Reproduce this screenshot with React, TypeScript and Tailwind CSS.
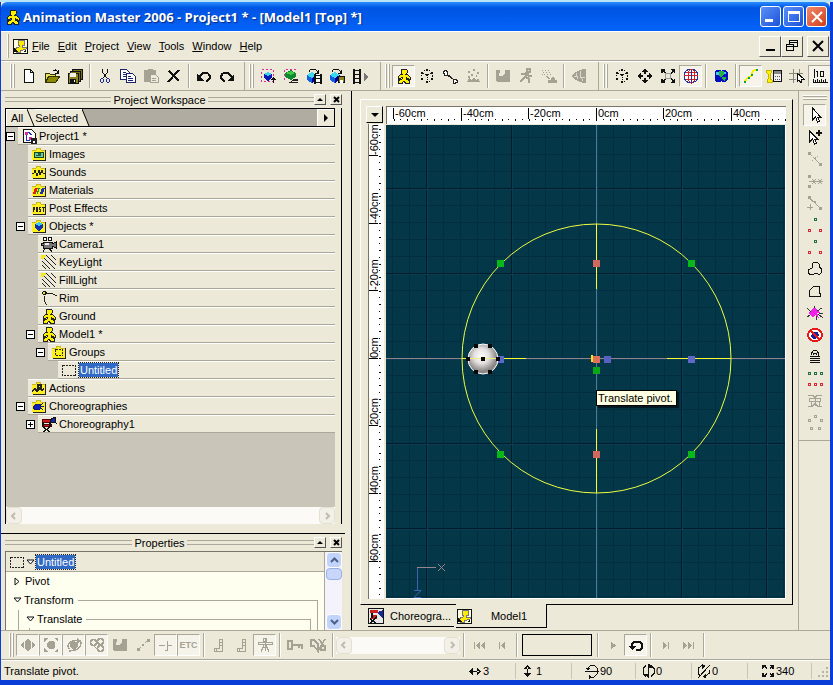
import { type ReactNode } from "react";
import { clsx } from "clsx";

const GREY = "#a5a193";

const man = (
  <path
    d="M6 1h4l1 1v3L9.500 6.500h2L14 9v2h-1.500L10 9.500V11l3.500 1.500V15H9.500L8 13l-1.500 2h-4v-2.500L6 11V9.500L3.500 11H2V9l2.500-2.500h2L5 5V2z"
    fill="#fff000"
    stroke="#222"
  />
);

const nodeRing = (color: string) => (
  <>
    <circle cx="8" cy="8" r="6" fill="none" stroke={color} strokeDasharray="1 2" />
    <path d="M4 5l4 2 4-2M8 7v6" fill="none" stroke={color} strokeDasharray="1 1" />
    <path
      d="M7 1h2v2H7zM2 4h2v2H2zM12 4h2v2h-2zM2 10h2v2H2zM12 10h2v2h-2zM7 13h2v2H7zM7 6h2v2H7z"
      fill={color}
    />
  </>
);

const cube = (
  <>
    <path d="M1 7l5-3 5 3v5l-5 3-5-3z" fill="#0000a0" />
    <path d="M1 7l5-3 5 3-5 3z" fill="#40d8f0" />
    <path d="M1 7l5 3v5l-5-3z" fill="#1060e0" />
  </>
);

const reel = (
  <path
    d="M0 0h2v15H0zM6 0h2v15H6zM2 1h4v1H2zM2 5h4v1H2zM2 9h4v1H2zM2 13h4v1H2z"
    fill="#111"
  />
);

const folder = (
  <>
    <path d="M1 4h4l1-2h3l1 2h4v10H1z" fill="#ffee20" />
    <path d="M14 4h1v11H2v-1h12z" fill="#222" />
    <path d="M1 4h4l1-2h3l1 2h4" fill="none" stroke="#c8b820" />
  </>
);

const spotRays = (
  <>
    <path d="M1 2l13 13M5 1l10 10M1 7l8 8M10 1l5 5M1 11l4 4" stroke="#222" />
    <path d="M0 1h5v2H3v2H0z" fill="#f4e820" />
  </>
);

const icons: Record<string, ReactNode> = {
  man,
  modelDoc: (
    <>
      <path d="M1 1h14v14H1z" fill="#fffce0" stroke="#111" />
      <path d="M7 2h5v5h-2v2h4v2l-3 1H8v2H4v-1H2v-2l5-2V7H6V4z" fill="#ffea00" stroke="#777" />
      <path d="M2 14h5l-5-4zM11 14l3-3v3z" fill="#111" />
    </>
  ),
  newFile: <path d="M3.500 1.500h6l3 3v10h-9zM9.500 1.500v3h3" fill="#fff" stroke="#111" />,
  open: (
    <>
      <path d="M1 13V5h4l1 1h5v2H5l-3 5z" fill="#e8e060" stroke="#333300" />
      <path d="M2 14l3-6h11l-4 6z" fill="#8c8800" stroke="#333300" />
      <path d="M9 3c2-2 4-1 5 2m0-3v3h-3" fill="none" stroke="#111" />
    </>
  ),
  saveAll: (
    <>
      <path d="M5 1h10v10H5z" fill="#777018" stroke="#111" />
      <path d="M3 3h10v10H3z" fill="#777018" stroke="#111" />
      <path d="M1 5h10v10H1z" fill="#8c8420" stroke="#111" />
      <path d="M3 5h6v4H3z" fill="#f4f2e8" />
      <path d="M3 11h6v4H3z" fill="#111" />
      <path d="M7 12h1v2H7z" fill="#fff" />
    </>
  ),
  cut: (
    <>
      <path d="M5.500 1v3l5 7M10.500 1v3l-5 7" fill="none" stroke="#111" />
      <ellipse cx="5" cy="12.500" rx="1.500" ry="2" fill="none" stroke="#1c2c9c" />
      <ellipse cx="11" cy="12.500" rx="1.500" ry="2" fill="none" stroke="#1c2c9c" />
    </>
  ),
  copy: (
    <>
      <path d="M.5 1.500h6l3 3v7h-9z" fill="#fff" stroke="#1c2470" />
      <path d="M3 4.500h3M3 6.500h5M3 8.500h5" stroke="#1c2470" />
      <path d="M6.500 5.500h6l3 3v6h-9z" fill="#fff" stroke="#1c2470" />
      <path d="M8 8.500h3M8 10.500h5M8 12.500h5" stroke="#1c2470" />
    </>
  ),
  paste: (
    <>
      <path d="M1 2h3l1-1h4l1 1h3v12H1z" fill={GREY} />
      <path d="M7.500 6.500h5l3 3v5h-8z" fill="#eceadc" stroke={GREY} />
      <path d="M9 10.500h4M9 12.500h4" stroke={GREY} />
    </>
  ),
  remove: <path d="M3 3l10 10M13 2L2 14" stroke="#111" strokeWidth="2" />,
  undo: (
    <>
      <path d="M4 9c1-5 9-6 10 0 0 2-2 4-4 4" fill="none" stroke="#111" strokeWidth="2" />
      <path d="M1 6v7h7z" fill="#111" />
    </>
  ),
  redo: (
    <>
      <path d="M12 9C11 4 3 3 2 9c0 2 2 4 4 4" fill="none" stroke="#111" strokeWidth="2" />
      <path d="M15 6v7H8z" fill="#111" />
    </>
  ),
  renderRegion: (
    <>
      <rect x="1.500" y="1.500" width="12" height="12" fill="none" stroke="#e02898" strokeDasharray="2 2" />
      <path d="M4 6l4-2 4 2v4l-4 3-4-3z" fill="#0818b0" />
      <path d="M4 6l4-2 4 2-4 2z" fill="#40d0e8" />
      <path d="M13.500 9v6m-2-3l2-2 2 2" fill="none" stroke="#111" />
    </>
  ),
  renderPreview: (
    <>
      <path d="M1.500 12V1.500H14" fill="none" stroke="#e02898" strokeDasharray="2 2" />
      <path d="M2 5l6-3 5 3v4l-5 3-6-3z" fill="#108a30" />
      <path d="M3 5l5-2 4 2-4 2z" fill="#40c840" />
      <path d="M6 14.500h9M15 11.500h-4l-3 2M9 12.500h6" fill="none" stroke="#222" />
    </>
  ),
  renderMovie: (
    <>
      {cube}
      <path d="M3 4c1-4 7-4 9 1m0-3v3H9" fill="none" stroke="#111" />
      <path d="M8 6h8v10H8z" fill="#fff" />
      <path d="M8 6h2v10H8zM14 6h2v10h-2zM10 7h4v1h-4zM10 10h4v1h-4zM10 14h4v1h-4z" fill="#111" />
    </>
  ),
  renderSave: (
    <>
      {cube}
      <path d="M3 4c1-4 7-4 9 1m0-3v3H9" fill="none" stroke="#111" />
      <path d="M9.500 8.500h6v6h-6z" fill="#8c8420" stroke="#111" />
      <path d="M11 12h3v3h-3z" fill="#fff" />
    </>
  ),
  film: (
    <>
      <g transform="translate(1 1)">{reel}</g>
      <path d="M12 5l4 4-4 4z" fill="#777" />
    </>
  ),
  nodes: nodeRing("#111"),
  bone: (
    <path
      d="M2 2h2v1h1v3l6 5h3v1h1v2h-2v1h-2v-4L5 7H2V5H1V3h1z"
      fill="#fff"
      stroke="#222"
    />
  ),
  grass: (
    <path
      d="M1 14h14l-2-4-2 2-2-3-3 3-2-2-1 3zM3 3h2v2H3zM8 1h2v2H8zM12 4h2v2h-2zM6 6h2v2H6zM11 7h1v2h-1zM3 8h2v2H3z"
      fill={GREY}
    />
  ),
  muscle: (
    <path d="M1 2h4v3H4v3h3l2-2h1V2h5v12H2l-1-3z" fill={GREY} />
  ),
  runner: (
    <path
      d="M9 1h3v3H9zM3 6h3l3-1 2 3h3M9 6l-3 4-4 4M8 9l3 2v4"
      fill="none"
      stroke={GREY}
      strokeWidth="2"
    />
  ),
  brush: (
    <>
      <path
        d="M1 2h1v1H1zM4 2h1v1H4zM7 2h1v1H7zM2 4h1v1H2zM5 4h1v1H5zM8 4h1v1H8zM3 6h1v1H3zM6 6h1v1H6zM9 6h1v1H9zM1 6h1v1H1z"
        fill={GREY}
      />
      <path d="M7 14h9v-2h-2l-2-3-2 3H7zM5 8l4 3" fill={GREY} stroke={GREY} />
    </>
  ),
  cone: (
    <>
      <path d="M0 8l5-4 7-3h3v14h-3l-7-3z" fill={GREY} />
      <path d="M5 5l2 6M9 3v4l3 6M3 8h4M9 9h5" fill="none" stroke="#dcd8c8" />
    </>
  ),
  move: (
    <path
      d="M8 0l3 4H5zM8 16l3-4H5zM0 8l4-3v6zM16 8l-4-3v6zM7 4h2v2H7zM7 10h2v2H7zM4 7h2v2H4zM10 7h2v2h-2z"
      fill="#111"
    />
  ),
  zoomFit: (
    <>
      <path
        d="M1 1h4v1L4 3l2 2-1 1-2-2-1 1H1zM15 1h-4v1l1 1-2 2 1 1 2-2 1 1h1zM1 15h4v-1l-1-1 2-2-1-1-2 2-1-1H1zM15 15h-4v-1l1-1-2-2 1-1 2 2 1-1h1z"
        fill="#111"
      />
      <circle cx="8" cy="8" r="3" fill="none" stroke="#999" />
    </>
  ),
  globe: (
    <>
      <circle cx="8" cy="8" r="7" fill="#fff" stroke="#2030a0" />
      <path d="M1 7.500h14M3 4.500h10M3 11.500h10" stroke="#d02028" />
      <path d="M8.500 1v14" stroke="#2030a0" />
      <ellipse cx="8.500" cy="8" rx="3.500" ry="7" fill="none" stroke="#d02028" />
    </>
  ),
  earth: (
    <>
      <path d="M3 2h4l1 1 1-1h4l2 3v6l-2 3H9l-1-1-1 1H3l-1-3V5z" fill="#0010c0" />
      <path d="M6 3h5v4L8 9 5 7zM9 9h4l-1 4-2-1z" fill="#28b040" />
      <path d="M3 4h3v3H3zM11 4h2v2h-2z" fill="#40c8f0" />
    </>
  ),
  spline: (
    <>
      <path d="M2 14c2-7 6-3 7-8s3-4 5-4" fill="none" stroke="#f4f000" strokeWidth="2" />
      <path d="M1 13h2v2H1zM5 9h2v2H5zM8 6h2v2H8zM13 1h2v2h-2z" fill="#10a040" />
    </>
  ),
  boneSheet: (
    <>
      <path d="M0 2h2l1 1 1-1h1v3L4 6v5l2 1v2H1v-2l1-1V6L0 4z" fill="#fff000" stroke="#c0b800" />
      <path d="M7.500 2.500h8v11h-8z" fill="#eee" stroke="#111" />
      <path d="M8 3h7v3H8z" fill="#888" />
      <path d="M9 8.500h5M9 11.500h5" stroke="#555" strokeDasharray="1 1" />
    </>
  ),
  gridSnap: (
    <>
      <path d="M4.500 1v14M10.500 1v6M0 5.500h14M0 11.500h7" stroke="#8c8878" />
      <path d="M8 5v9l2-2 2 3 1-1-1-3h3z" fill="#fff" stroke="#111" />
    </>
  ),
  units: (
    <>
      <path d="M1 14.500h15M1.500 11v3M3.500 12v2M5.500 11v3M7.500 12v2M9.500 11v3M11.500 12v2M13.500 11v3M2.500 1v9" stroke="#111" />
      <path d="M4 3.500h1.500V9M8.500 3.500h3V8.500h-3z" fill="none" stroke="#111" />
    </>
  ),
  // tree
  project: (
    <>
      <path d="M2.500 1.500h8l4 4v9h-12z" fill="#fff" stroke="#111" />
      <path d="M4 4h3v3H4zM8 9h3v3H8z" fill="#d030a0" />
      <path d="M5.500 7v5h3M7 4l4 3" fill="none" stroke="#2030b0" />
      <path d="M10 10h6v6h-6z" fill="#222" />
      <path d="M12 13h2v2h-2z" fill="#fff" />
    </>
  ),
  images: (
    <>
      {folder}
      <path d="M3.500 6.500h9v5h-9z" fill="#70c8a0" stroke="#184818" />
      <path d="M5 9h2V7h3v3H5z" fill="#206048" />
    </>
  ),
  sounds: (
    <>
      {folder}
      <path d="M1 9h2l1-3 2 6 2-6 1 5 2-5 1 3h2" fill="none" stroke="#222" />
    </>
  ),
  materials: (
    <>
      {folder}
      <path d="M4 6h3l-2 6H2z" fill="#e02020" />
      <path d="M7 6h2l-2 6H6z" fill="#10a030" />
      <path d="M11 6h3l-2 6H9z" fill="#1830c0" />
    </>
  ),
  post: (
    <>
      {folder}
      <path
        d="M2.500 12V7.500h1v2h-1M5.500 7.500h1v4h-1zM10 7.500H8.500v2h1v2H8M11 7.500h3M12.500 7v5"
        fill="none"
        stroke="#222"
      />
    </>
  ),
  objects: (
    <>
      {folder}
      <path d="M4 6l4-2 4 2v4l-4 3-4-3z" fill="#1030b0" />
      <path d="M4 6l4-2 4 2-4 2z" fill="#40c8f0" />
    </>
  ),
  camera: (
    <>
      <circle cx="4" cy="3" r="2" fill="#fff" stroke="#111" />
      <circle cx="9" cy="3" r="2" fill="#fff" stroke="#111" />
      <path d="M2 6h9v2l4-2v6l-4-2v2H2V9H0V7h2z" fill="#777" stroke="#111" />
      <path d="M4 12l-2 4M8 12l3 4" stroke="#111" />
      <path d="M4 7h4v2H4z" fill="#eee" />
    </>
  ),
  light: spotRays,
  rim: (
    <>
      <path d="M2 1h3v1h1v2H5v1H2V4H1V2h1z" fill="#111" />
      <path d="M2 2h2v2H2z" fill="#e8e020" />
      <path d="M6 3h3l3 1 4 2M3.500 6v5l2 4" fill="none" stroke="#222" />
    </>
  ),
  groups: (
    <>
      {folder}
      <rect x="4.500" y="5.500" width="7" height="6" fill="none" stroke="#222" strokeDasharray="2 1" />
    </>
  ),
  selection: (
    <rect x="1.500" y="3.500" width="13" height="10" fill="none" stroke="#222" strokeDasharray="2 1" />
  ),
  actions: (
    <>
      {folder}
      <path d="M1 11l3-2 2 2 3-3 2 2 2-1M7 5h3v3H7z" fill="none" stroke="#222" strokeWidth="1.500" />
    </>
  ),
  choreographies: (
    <>
      {folder}
      <path d="M2 9l3-3h4v5l-2 1-4-1zM12 5l-2 2M13 8.500h-3M12 12l-2-2" fill="#1020c0" stroke="#101870" />
    </>
  ),
  director: (
    <>
      <path d="M1 3h8v3H1zM1 8h9v2H1z" fill="#d01818" stroke="#500" />
      <path d="M2 6v4M9 6v4M2 11l7 5M9 11l-7 5" stroke="#111" strokeWidth="1.500" />
      <path d="M9 4l5-3 1 6-5-1z" fill="#1828a0" stroke="#111" />
    </>
  ),
  choreoDoc: (
    <>
      <path d="M.5.5h15v15H.5z" fill="#e8e8e8" stroke="#111" />
      <path d="M2 2h8v3H2zM3 7h6v4H3z" fill="#c82020" />
      <path d="M2 11l6 4M9 9l-7 6M4 5v5" stroke="#111" strokeWidth="1.500" />
      <path d="M10 4l5-2v8l-4-3z" fill="#182890" />
    </>
  ),
  // right-hand tools
  pointer: <path d="M5.500 1v12l3-3 2 5 2-1-2-4h3z" fill="#fff" stroke="#111" />,
  pointerAdd: (
    <>
      <path d="M2.500 2v11l3-3 2 5 2-1-2-4h3z" fill="#fff" stroke="#111" />
      <path d="M12 1v6M9 4h6" stroke="#111" strokeWidth="2" />
    </>
  ),
  breakSpline: (
    <>
      <path d="M1 1h3v3H1zM12 12h3v3h-3z" fill={GREY} />
      <path d="M4 4l8 8M5 10l6-5" fill="none" stroke={GREY} strokeDasharray="2 1" />
    </>
  ),
  detach: (
    <>
      <path d="M1 2h3v3H1zM1 12h3v3H1z" fill={GREY} />
      <path d="M2 8.500h14M5 6l4 5M9 6l-4 5M11 6l4 5M15 6l-4 5" fill="none" stroke={GREY} />
    </>
  ),
  insertPoint: (
    <>
      <path d="M1 1h3v3H1zM12 12h3v3h-3zM7 6h2v2H7z" fill={GREY} />
      <path d="M3.500 9v6M0 12.500h6M3 4l4 3 5 5" fill="none" stroke={GREY} />
    </>
  ),
  triangle: (
    <>
      <path d="M7.500 1.500h2v2h-2z" fill="none" stroke="#207040" />
      <path d="M1.500 12.500h2v2h-2zM12.500 12.500h2v2h-2z" fill="none" stroke="#d82838" />
    </>
  ),
  lasso: (
    <path
      d="M6 2c3-2 8 0 6 4 3 1 4 5 1 7-3 1-4-2-6 0-3 2-6 0-6-3 0-2 3-2 4-3s-1-3 1-5z"
      fill="none"
      stroke="#111"
    />
  ),
  polyLasso: <path d="M2.500 13.500V7.500l4-4h6v7h1v3z" fill="none" stroke="#111" />,
  lathe: (
    <>
      <path d="M1 8l6-6 3 2 4 5-4-1 2 5-4-3-2 3-2-3z" fill="#f020e8" />
      <path d="M0 3l4 4M0 12l3-2M7.500 1v2M10 6l5-3M11 9l5 4M9.500 11v4M12 8.500h4" stroke="#333" />
    </>
  ),
  hide: (
    <>
      <ellipse cx="8" cy="8" rx="7" ry="6" fill="#fff" stroke="#e81818" strokeWidth="2" />
      <path d="M4 9l3-4h4l1 3-3 4H6z" fill="#1020a0" />
      <path d="M4 4l8 8" stroke="#e81818" strokeWidth="2" />
    </>
  ),
  lock: (
    <path
      d="M4.500 6V4l2-2.500h3l2 2.500v3M6.500 6V4.500h3V6M3 7.500h10M3 9.500h10M3 11.500h10M3 13.500h10"
      fill="none"
      stroke="#111"
    />
  ),
  weld: (
    <>
      <path d="M1.500 1.500h2v2h-2zM7.500 1.500h2v2h-2zM13.500 1.500h2v2h-2z" fill="none" stroke="#207040" />
      <path d="M1.500 12.500h2v2h-2zM7.500 12.500h2v2h-2zM13.500 12.500h2v2h-2z" fill="none" stroke="#d82838" />
    </>
  ),
  hook: (
    <path
      d="M1 2.500h5l2 2 2-2h5M2.500 5.500h11v3h-11zM1 13.500h4l3-3 3 3h4M4.500 9v5M12.500 9v5M8.500 4v9"
      fill="none"
      stroke={GREY}
    />
  ),
  fivePoint: (
    <path
      d="M7.500.5h2v2h-2zM1.500 4.500h2v2h-2zM13.500 4.500h2v2h-2zM3.500 12.500h2v2h-2zM11.500 12.500h2v2h-2z"
      fill="none"
      stroke={GREY}
    />
  ),
  // bottom bar
  translate: (
    <path d="M8 1l3 4H5zM8 15l3-4H5zM0 8l4-3v6zM16 8l-4-3v6zM5 5h6v6H5z" fill={GREY} />
  ),
  scale: (
    <path
      d="M1 1h4L1 5zM15 1h-4l4 4zM1 15h4l-4-4zM15 15h-4l4-4zM6 4h4l2 2v4l-2 2H6l-2-2V6z"
      fill={GREY}
    />
  ),
  rotate: (
    <>
      <path d="M4 6l4-2 4 2v4l-4 3-4-3z" fill={GREY} />
      <path d="M3 12c-3-5 3-10 9-8M15 5c0 6-5 9-12 9" fill="none" stroke={GREY} strokeWidth="1.500" />
      <path d="M11 1l5 3-5 3z" fill={GREY} />
    </>
  ),
  rings: (
    <>
      <circle cx="4.500" cy="5.500" r="3" fill="none" stroke={GREY} strokeWidth="1.500" />
      <circle cx="11.500" cy="4.500" r="3" fill="none" stroke={GREY} strokeWidth="1.500" />
      <circle cx="11.500" cy="11.500" r="3" fill="none" stroke={GREY} strokeWidth="1.500" />
      <path d="M5 9l3 3" stroke={GREY} />
    </>
  ),
  chain: (
    <>
      <path d="M2 11h3v3H2zM7 7h2v2H7zM12 2h3v3h-3z" fill={GREY} />
      <path d="M4 12l9-9" stroke={GREY} strokeDasharray="3 1" />
    </>
  ),
  channel: <path d="M1 8.500h6M9 8.500h5M9.500 4v9H7" fill="none" stroke={GREY} />,
  leg: <path d="M8.500 2v9h-5v3h8V2M8 2.500h4M8 5.500h4M8 8.500h4M5.500 11v3" fill="none" stroke={GREY} />,
  skeleton: (
    <path
      d="M6.500 1.500h3v3h-3zM1 5.500h14v2H1zM6.500 7.500h3v3h-3zM4 14.500l2-4h4l2 4M8.500 1v13"
      fill="none"
      stroke={GREY}
    />
  ),
  keyframe: <path d="M1 4h4v8H1zM5 8h10v4M12 8v3" fill="none" stroke={GREY} strokeWidth="1.500" />,
  keyOff: (
    <path
      d="M1 3h3l4 4v7L4 9H1zM9 2l6 9M15 2L8 14M11 9h4v4h-4z"
      fill="none"
      stroke={GREY}
      strokeWidth="1.500"
    />
  ),
  first: <path d="M3 5h1v7H3zM9 5v7L5 8.500zM14 5v7l-4-3.500z" fill={GREY} />,
  prev: <path d="M5 5h1v7H5zM11 5v7L7 8.500z" fill={GREY} />,
  play: <path d="M6 5v7l5-3.500z" fill={GREY} />,
  next: <path d="M10 5h1v7h-1zM5 5v7l4-3.500z" fill={GREY} />,
  last: <path d="M12 5h1v7h-1zM2 5v7l4-3.500zM7 5v7l4-3.500z" fill={GREY} />,
  loop: (
    <>
      <path d="M8 13h4l2-2V7l-2-2H6L4 7v3" fill="none" stroke="#111" strokeWidth="2" />
      <path d="M1 9h7l-3.500 4z" fill="#111" />
    </>
  ),
  // status bar
  arrowsX: <path d="M4 8h8v1H4zM6 5v7L2 8.500zM10 5v7l4-3.500z" fill="#111" />,
  arrowsY: <path d="M7 4h1v8H7zM4 6h7L7.500 2zM4 10h7l-3.500 4z" fill="#111" />,
  turnX: (
    <>
      <path d="M1 8.500h14M4 5l3-3h3l3 3v6l-3 3H7" fill="none" stroke="#111" />
      <path d="M2 5h4L4 8zM5 12l3 2-3 2z" fill="#111" />
    </>
  ),
  turnY: (
    <>
      <path d="M8.500 1v14M6 2.500l-3 3v5l3 3M11 13.500l3-3v-5l-3-3" fill="none" stroke="#111" />
      <path d="M4 11h4v4zM13 5H9V1z" fill="#111" />
    </>
  ),
  turnZ: (
    <>
      <path d="M2 15L14 2M6 2.500l-4 3v5l2 2M9 13.500l4-3V7" fill="none" stroke="#111" />
      <path d="M6 1l4 2-4 3zM10 11v4l-4-1z" fill="#111" />
    </>
  ),
  spread: (
    <path
      d="M2 2h4v1H5l2 2-1 1-2-2-1 1v1H2zM14 2h-4v1h1L9 5l1 1 2-2v2h2zM2 14h4v-1H5l2-2-1-1-2 2v-2H2zM14 14h-4v-1h1l-2-2 1-1 2 2v-2h2z"
      fill="#111"
    />
  ),
};

const Icon = ({ name, className }: { name: string; className?: string }) => (
  <svg
    viewBox="0 0 16 16"
    aria-hidden="true"
    shapeRendering="crispEdges"
    className={clsx("h-4 w-4 shrink-0", className)}
  >
    {icons[name]}
  </svg>
);

const ToolButton = ({
  icon,
  label,
  pressed,
  children,
}: {
  icon?: string;
  label: string;
  pressed?: boolean;
  children?: ReactNode;
}) => (
  <button
    type="button"
    aria-label={label}
    className={clsx(
      "flex h-[22px] w-[23px] shrink-0 items-center justify-center border",
      pressed
        ? "border-t-[#aca899] border-r-white border-b-white border-l-[#aca899] bg-[#f6f4ea]"
        : "border-transparent",
    )}
  >
    {icon ? <Icon name={icon} /> : children}
  </button>
);

const Separator = () => (
  <div className="flex w-[7px] shrink-0 justify-center">
    <div className="h-6 w-0.5 border-r border-l border-r-white border-l-[#aca899]" />
  </div>
);

const Grip = () => (
  <div className="mr-0.5 flex h-6 w-[5px] shrink-0 gap-px">
    <div className="w-0.5 border-r border-l border-r-[#aca899] border-l-white" />
    <div className="w-0.5 border-r border-l border-r-[#aca899] border-l-white" />
  </div>
);

const ToolGroup = ({
  items,
  className,
}: {
  items: (string | null)[];
  className?: string;
}) => (
  <div className={clsx("flex shrink-0 items-center border-l pl-1", className)}>
    <Grip />
    {items.map((item, i) =>
      item ? (
        <ToolButton
          key={i}
          icon={item.replace("!", "")}
          label={item.replace("!", "")}
          pressed={item.endsWith("!")}
        />
      ) : (
        <Separator key={i} />
      ),
    )}
  </div>
);

const TitleBar = () => (
  <header className="flex h-[29px] shrink-0 items-center rounded-t-md bg-linear-to-b from-[#2a8cff] via-[#0054e3] via-20% to-[#0463f8] pr-[3px] pl-1">
    <Icon name="man" />
    <h1 className="ml-0.5 flex-1 truncate font-['Open_Sans','Noto_Sans',sans-serif] text-[13px] font-bold text-white [text-shadow:1px_1px_1px_#0a2a80]">
      Animation Master 2006 - Project1 * - [Model1 [Top] *]
    </h1>
    <div className="flex gap-0.5">
      <button
        type="button"
        aria-label="Minimize"
        className="flex h-[21px] w-[21px] items-end rounded-[3px] border border-white bg-linear-to-br from-[#5c90f8] to-[#1c50d8] p-1"
      >
        <span className="h-[3px] w-2 bg-white" />
      </button>
      <button
        type="button"
        aria-label="Maximize"
        className="flex h-[21px] w-[21px] items-center justify-center rounded-[3px] border border-white bg-linear-to-br from-[#5c90f8] to-[#1c50d8]"
      >
        <span className="h-[11px] w-3 border border-t-[3px] border-white" />
      </button>
      <button
        type="button"
        aria-label="Close"
        className="flex h-[21px] w-[21px] items-center justify-center rounded-[3px] border border-white bg-linear-to-br from-[#f0886c] to-[#d03c10]"
      >
        <svg viewBox="0 0 12 12" className="h-3 w-3">
          <path d="M1 1l10 10M11 1L1 11" stroke="#fff" strokeWidth="2" />
        </svg>
      </button>
    </div>
  </header>
);

const mdiButton =
  "flex h-[21px] w-[22px] items-center justify-center border border-t-white border-r-[#555] border-b-[#555] border-l-white";

const MenuBar = () => (
  <nav className="flex h-[30px] shrink-0 items-center border-t border-b border-t-white border-b-[#aca899] pl-1.5">
    <div className="mr-[3px] h-6 w-0.5 border-r border-l border-r-[#aca899] border-l-white" />
    <Icon name="modelDoc" />
    {["File", "Edit", "Project", "View", "Tools", "Window", "Help"].map((item) => (
      <button key={item} type="button" className="px-1">
        <u>{item[0]}</u>
        {item.slice(1)}
      </button>
    ))}
    <div className="ml-auto flex pr-px">
      <button type="button" aria-label="Minimize document" className={mdiButton}>
        <svg viewBox="0 0 12 12" className="h-3 w-3">
          <path d="M2 9h9v2H2z" />
        </svg>
      </button>
      <button type="button" aria-label="Restore document" className={mdiButton}>
        <svg viewBox="0 0 12 12" shapeRendering="crispEdges" className="h-3 w-3">
          <path d="M3.500 4V.5h8v6H8M4 2h7M.5 4.500h7v6h-7zM1 6h7" fill="none" stroke="#000" />
        </svg>
      </button>
      <button type="button" aria-label="Close document" className={clsx(mdiButton, "ml-1")}>
        <svg viewBox="0 0 12 12" className="h-3 w-3">
          <path d="M1 1l10 10M11 1L1 11" stroke="#000" strokeWidth="2" />
        </svg>
      </button>
    </div>
  </nav>
);

const TopToolbar = () => (
  <div className="flex h-[30px] shrink-0 overflow-hidden border-t border-b border-t-white border-b-[#aca899]">
    <ToolGroup
      className="border-l-transparent pr-1.5 pl-2"
      items={["newFile", "open", "saveAll", null, "cut", "copy", "paste", "remove", null, "undo", "redo"]}
    />
    <ToolGroup
      className="border-l-[#aca899] pr-[9px]"
      items={["renderRegion", "renderPreview", "renderMovie", "renderSave", "film"]}
    />
    <ToolGroup
      className="border-l-[#aca899] pr-2"
      items={["man!", "nodes", "bone", "grass", null, "muscle", "runner", "brush", null, "cone"]}
    />
    <ToolGroup
      className="border-l-[#aca899]"
      items={["nodes", "move", "zoomFit", "globe!", null, "earth", null, "spline!", "boneSheet", "gridSnap", "units!"]}
    />
  </div>
);

const PanelHeader = ({ title }: { title: string }) => (
  <div className="flex h-[17px] shrink-0 items-center">
    <div className="h-[5px] flex-1 border-t border-b border-[#aca899]" />
    <h2 className="px-0.5">{title}</h2>
    <div className="h-[5px] flex-1 border-t border-b border-[#aca899]" />
    <button
      type="button"
      aria-label={`Collapse ${title}`}
      className="mr-1 flex h-[11px] w-3 items-center justify-center border border-t-white border-r-[#555] border-b-[#555] border-l-white"
    >
      <svg viewBox="0 0 6 3" className="h-[3px] w-1.5">
        <path d="M0 3l3-3 3 3z" />
      </svg>
    </button>
    <button
      type="button"
      aria-label={`Close ${title}`}
      className="flex h-[11px] w-3 items-center justify-center border border-t-white border-r-[#555] border-b-[#555] border-l-white"
    >
      <svg viewBox="0 0 7 7" className="h-[7px] w-[7px]">
        <path d="M1 1l5 5M6 1L1 6" stroke="#000" strokeWidth="2" />
      </svg>
    </button>
  </div>
);

type TreeNode = {
  label: string;
  icon: string;
  depth: number;
  toggle?: "+" | "-";
  selected?: boolean;
};

const tree: TreeNode[] = [
  { label: "Project1 *", icon: "project", depth: 0, toggle: "-" },
  { label: "Images", icon: "images", depth: 1 },
  { label: "Sounds", icon: "sounds", depth: 1 },
  { label: "Materials", icon: "materials", depth: 1 },
  { label: "Post Effects", icon: "post", depth: 1 },
  { label: "Objects *", icon: "objects", depth: 1, toggle: "-" },
  { label: "Camera1", icon: "camera", depth: 2 },
  { label: "KeyLight", icon: "light", depth: 2 },
  { label: "FillLight", icon: "light", depth: 2 },
  { label: "Rim", icon: "rim", depth: 2 },
  { label: "Ground", icon: "man", depth: 2 },
  { label: "Model1 *", icon: "man", depth: 2, toggle: "-" },
  { label: "Groups", icon: "groups", depth: 3, toggle: "-" },
  { label: "Untitled", icon: "selection", depth: 4, selected: true },
  { label: "Actions", icon: "actions", depth: 1 },
  { label: "Choreographies", icon: "choreographies", depth: 1, toggle: "-" },
  { label: "Choreography1", icon: "director", depth: 2, toggle: "+" },
];

const gutters = ["w-3", "w-[22px]", "w-8", "w-[42px]", "w-[52px]"];

const TreeRow = ({ node }: { node: TreeNode }) => (
  <li className="flex h-[18px]">
    <div className={clsx("flex shrink-0 items-center justify-end pr-[3px]", gutters[node.depth])}>
      {node.toggle ? (
        <button
          type="button"
          aria-label={`Toggle ${node.label}`}
          className="flex h-[9px] w-[9px] items-center justify-center border border-black bg-white"
        >
          <svg viewBox="0 0 5 5" className="h-[5px] w-[5px]">
            <path d={node.toggle === "+" ? "M0 2h5v1H0zM2 0h1v5H2z" : "M0 2h5v1H0z"} />
          </svg>
        </button>
      ) : null}
    </div>
    <div className="flex flex-1 items-center border-t border-b border-t-white border-b-[#aca899] bg-[#ece9d8] pl-[3px]">
      <Icon name={node.icon} />
      <span
        className={clsx(
          "ml-0.5",
          node.selected && "bg-[#316ac5] px-px leading-[14px] text-white outline outline-dotted outline-[#222]",
        )}
      >
        {node.label}
      </span>
    </div>
  </li>
);

const TabEdge = ({ over }: { over?: boolean }) => (
  <svg viewBox="0 0 8 17" className="h-[17px] w-2 shrink-0">
    <path d={over ? "M0 0h8v17H0z" : "M0 0l7 17H0z"} fill="#ece9d8" />
    <path d="M0 0l7 17" stroke="#000" />
  </svg>
);

const ScrollTrack = ({ className }: { className?: string }) => (
  <div className={clsx("flex h-[17px] shrink-0 justify-between bg-[#fbfaf6]", className)}>
    <button type="button" disabled aria-label="Scroll left" className="w-4 rounded-sm border border-[#e4e0d0] bg-[#f2f0e8]">
      <svg viewBox="0 0 14 14" className="h-3.5 w-3.5">
        <path d="M8 4L5 7l3 3" fill="none" stroke="#c0bcac" strokeWidth="2" />
      </svg>
    </button>
    <button type="button" disabled aria-label="Scroll right" className="w-4 rounded-sm border border-[#e4e0d0] bg-[#f2f0e8]">
      <svg viewBox="0 0 14 14" className="h-3.5 w-3.5">
        <path d="M6 4l3 3-3 3" fill="none" stroke="#c0bcac" strokeWidth="2" />
      </svg>
    </button>
  </div>
);

const ProjectWorkspace = () => (
  <section className="flex min-h-0 flex-1 flex-col pr-[9px] pl-1">
    <PanelHeader title="Project Workspace" />
    <div className="mb-[9px] flex min-h-0 flex-1 flex-col border-r border-r-black pr-1.5">
      <div className="flex h-[19px] shrink-0 border border-black bg-[#b0aca1]" role="tablist">
        <button type="button" role="tab" aria-selected="true" className="border-t border-l border-white bg-[#ece9d8] px-1">
          All
        </button>
        <TabEdge over />
        <button type="button" role="tab" aria-selected="false" className="border-t border-white bg-[#ece9d8] pr-1">
          Selected
        </button>
        <TabEdge />
        <button
          type="button"
          aria-label="Next tab"
          className="ml-auto flex w-[17px] items-center justify-center border-t border-l border-white bg-[#ece9d8]"
        >
          <svg viewBox="0 0 4 8" className="h-2 w-1">
            <path d="M0 0l4 4-4 4z" />
          </svg>
        </button>
      </div>
      <div className="flex min-h-0 flex-1 flex-col border-l border-black bg-[#c9c5b9]">
        <ul className="min-h-0 flex-1 overflow-hidden">
          {tree.map((node) => (
            <TreeRow key={node.label} node={node} />
          ))}
        </ul>
        <ScrollTrack />
      </div>
    </div>
  </section>
);

const DownTriangle = () => (
  <svg viewBox="0 0 9 6" className="h-1.5 w-[9px] shrink-0">
    <path d="M1 1h7L4.500 5z" fill="#fff" stroke="#111" />
  </svg>
);

const Properties = () => (
  <section className="mr-1.5 flex h-[97px] shrink-0 flex-col border-t border-black pr-[3px] pl-1">
    <PanelHeader title="Properties" />
    <div className="flex min-h-0 flex-1 border-t border-l border-[#77746a]">
      <div className="flex min-w-0 flex-1 flex-col overflow-hidden border-r border-[#aca899] bg-[#fffff0]">
        <div className="flex h-5 shrink-0 items-center border-b border-[#aca899] bg-[#ece9d8] pl-[3px]">
          <Icon name="selection" />
          <span className="mx-px flex">
            <DownTriangle />
          </span>
          <span className="bg-[#316ac5] px-px leading-[14px] text-white outline outline-dotted outline-[#222]">
            Untitled
          </span>
        </div>
        <div className="flex h-[18px] shrink-0 items-center pl-2">
          <svg viewBox="0 0 6 9" className="mr-[5px] h-[9px] w-1.5">
            <path d="M1 1v7l4-3.500z" fill="#fff" stroke="#111" />
          </svg>
          Pivot
        </div>
        <fieldset className="mr-1.5 ml-3 h-24 border-t border-r border-l border-[#aca899] pr-1.5 pl-2.5">
          <legend className="-ml-4 flex h-5 items-center gap-0.5 bg-[#fffff0] pr-1">
            <DownTriangle />
            Transform
          </legend>
          <fieldset className="h-20 border-t border-r border-l border-[#aca899]">
            <legend className="-ml-1 flex h-[18px] items-center gap-0.5 bg-[#fffff0] pr-1">
              <DownTriangle />
              Translate
            </legend>
          </fieldset>
        </fieldset>
      </div>
      <div className="flex w-[17px] flex-col bg-[#f4f3fc] pl-px">
        <button type="button" aria-label="Scroll up" className="flex h-4 items-center justify-center rounded-sm border border-white bg-[#c2d3fc]">
          <svg viewBox="0 0 9 6" className="h-1.5 w-[9px]">
            <path d="M1 5l3.500-3.500L8 5" fill="none" stroke="#4d6185" strokeWidth="2" />
          </svg>
        </button>
        <div className="h-3 rounded-sm border border-[#98b0e8] bg-[#c8d6fb]" />
        <button type="button" aria-label="Scroll down" className="mt-auto flex h-4 items-center justify-center rounded-sm border border-white bg-[#c2d3fc]">
          <svg viewBox="0 0 9 6" className="h-1.5 w-[9px]">
            <path d="M1 1l3.500 3.500L8 1" fill="none" stroke="#4d6185" strokeWidth="2" />
          </svg>
        </button>
      </div>
    </div>
  </section>
);

// Ruler labels, as distance in pixels from the world origin.
const marks = [
  { label: "-60cm", at: -203 },
  { label: "-40cm", at: -135 },
  { label: "-20cm", at: -68 },
  { label: "0cm", at: 0 },
  { label: "20cm", at: 67 },
  { label: "40cm", at: 135 },
];

const ORIGIN_X = 210;
const ORIGIN_Y = 233;

const TopRuler = () => (
  <div className="h-[18px] min-w-0 overflow-hidden border-t border-l border-[#77746a] bg-white">
    <svg className="h-full w-full" fontSize="11">
      <g transform={`translate(${ORIGIN_X - 1} 0)`}>
        {Array.from({ length: 60 }, (_, i) => (
          <rect key={i} x={Math.round((i - 30) * 6.75)} y="12" width="1" height={i % 2 ? 1 : 2} />
        ))}
        {marks.map(({ label, at }) => (
          <g key={label} transform={`translate(${at} 0)`}>
            <rect x="0" y="1" width="1" height="11" />
            <text x="2" y="10">
              {label}
            </text>
          </g>
        ))}
      </g>
    </svg>
  </div>
);

const SideRuler = () => (
  <div className="-mt-px ml-0.5 min-h-0 overflow-hidden border-l border-[#77746a] bg-white">
    <svg className="h-full w-full" fontSize="11">
      <g transform={`translate(0 ${ORIGIN_Y + 1})`}>
        {Array.from({ length: 80 }, (_, i) => (
          <rect key={i} x="10" y={Math.round((i - 40) * 6.75)} width={i % 2 ? 1 : 2} height="1" />
        ))}
        {[...marks, { label: "60cm", at: 203 }].map(({ label, at }) => (
          <g key={label} transform={`translate(0 ${at})`}>
            <rect x="0" y="0" width="9" height="1" />
            <text x="0" y="9" transform="rotate(-90)">
              {label}
            </text>
          </g>
        ))}
      </g>
    </svg>
  </div>
);

const handles = [
  { x: -96, y: -95, fill: "#08b818" },
  { x: 95, y: -95, fill: "#08b818" },
  { x: -96, y: 96, fill: "#08b818" },
  { x: 95, y: 96, fill: "#08b818" },
  { x: 0, y: -95, fill: "#d06860" },
  { x: 0, y: 96, fill: "#d06860" },
  { x: -96, y: 1, fill: "#5868c8" },
  { x: 95, y: 1, fill: "#6068c8" },
  { x: 11, y: 1, fill: "#5860c0" },
  { x: 0, y: 1, fill: "#e07058" },
  { x: 0, y: 12, fill: "#08a818" },
];

const ball = [
  [-15, 0],
  [-7, -13],
  [7, -13],
  [15, 0],
  [7, 13],
  [-7, 13],
  [0, 0],
];

const Viewport = () => (
  <div className="relative min-h-0 min-w-0 overflow-hidden bg-[#043848]">
    <svg className="absolute h-full w-full">
      <defs>
        <pattern id="minor" width="17" height="17" patternUnits="userSpaceOnUse">
          <path d="M0 .5h17M.5 0v17" stroke="#022f40" />
        </pattern>
        <pattern id="major" width="85" height="85" patternUnits="userSpaceOnUse">
          <path d="M0 .5h85M.5 0v85" stroke="#001c2a" />
          <path d="M0 1.500h85M1.500 0v85" stroke="#0c3c54" />
        </pattern>
        <radialGradient id="ball" cx="45%" cy="40%">
          <stop offset="0" stopColor="#fff" />
          <stop offset=".5" stopColor="#e4e0e0" />
          <stop offset="1" stopColor="#8c8888" />
        </radialGradient>
      </defs>
      <g transform={`translate(${ORIGIN_X} ${ORIGIN_Y})`}>
        <rect x="-1700" y="-1700" width="3400" height="3400" fill="url(#minor)" />
        <rect x="-1700" y="-1700" width="3400" height="3400" fill="url(#major)" />
        <g shapeRendering="crispEdges">
          <rect x="-1700" y="0" width="3400" height="1" fill="#94828a" />
          <rect x="0" y="-1700" width="1" height="3400" fill="#4a7c98" />
          <rect x="0" y="-134" width="1" height="65" fill="#f8fc30" />
          <rect x="0" y="71" width="1" height="64" fill="#f8fc30" />
          <rect x="-134" y="0" width="64" height="1" fill="#f8fc30" />
          <rect x="71" y="0" width="64" height="1" fill="#f8fc30" />
        </g>
        <circle cx=".5" cy=".5" r="134.500" fill="none" stroke="#ecfc40" />
        <path d="M-5-3h2v7h-2z" fill="#f4e020" />
        {handles.map(({ x, y, fill }) => (
          <rect key={`${x},${y}`} x={x - 3} y={y - 3} width="7" height="7" fill={fill} />
        ))}
        <g transform="translate(-113 1)">
          <circle cx="0" cy="0" r="15" fill="url(#ball)" stroke="#fff" />
          <path d="M-14-.5h28" stroke="#f0f080" />
          {ball.map(([x, y]) => (
            <rect key={`${x},${y}`} x={x - 2} y={y - 2} width="4" height="4" fill="#080808" />
          ))}
        </g>
      </g>
    </svg>
    <svg viewBox="0 0 32 32" className="absolute bottom-0 left-[26px] h-8 w-8 overflow-visible">
      <path d="M5.500 24V1" stroke="#3c64b4" />
      <path d="M5 1.500h19" stroke="#98848c" />
      <path d="M26-2l7 7M33-2l-7 7" stroke="#98848c" />
      <path d="M2 24.500h7l-7 7h7" fill="none" stroke="#3c64b4" />
    </svg>
    <div
      role="tooltip"
      className="absolute top-[265px] left-[210px] border border-black bg-[#ffffe1] pr-[3px] pl-px leading-[14px] whitespace-nowrap shadow-[2px_2px_1px_#001822]"
    >
      Translate pivot.
    </div>
  </div>
);

const DocumentArea = () => (
  <main className="flex min-w-0 flex-1 flex-col border-l border-l-black pt-2 pr-[5px] pb-0.5 pl-2">
    <div className="grid min-h-0 flex-1 grid-cols-[18px_minmax(0,1fr)] grid-rows-[18px_minmax(0,1fr)] gap-x-0.5 gap-y-px border-t border-r border-b border-l border-t-white border-r-black border-b-black border-l-white pt-1.5 pr-1.5 pb-[5px] pl-[5px]">
      <button
        type="button"
        aria-label="View menu"
        className="flex h-[17px] w-[17px] items-center justify-center border border-t-white border-r-black border-b-black border-l-white"
      >
        <svg viewBox="0 0 8 4" className="h-1 w-2">
          <path d="M0 0h8L4 4z" />
        </svg>
      </button>
      <TopRuler />
      <SideRuler />
      <div className="grid min-h-0 min-w-0 border-r border-b border-white">
        <Viewport />
      </div>
    </div>
    <div className="-mt-px flex h-6 shrink-0 pl-2" role="tablist">
      <button
        type="button"
        role="tab"
        aria-selected="false"
        className="mt-px flex h-[22px] w-[86px] items-center gap-1.5 border-b border-black"
      >
        <Icon name="choreoDoc" />
        Choreogra...
      </button>
      <button
        type="button"
        role="tab"
        aria-selected="true"
        className="ml-0.5 flex w-[91px] items-center border-r border-b border-black bg-[#ece9d8]"
      >
        <Icon name="modelDoc" />
        <span className="flex-1">Model1</span>
      </button>
    </div>
  </main>
);

const rightTools = [
  "pointer!", "pointerAdd", "breakSpline", "detach", "insertPoint", "triangle", "triangle", "lasso",
  "polyLasso", "lathe", "hide", "lock", "weld", "hook", "fivePoint",
];

const RightToolbar = () => (
  <aside className="flex w-8 shrink-0 flex-col border-l border-l-[#aca899]">
    <div className="flex flex-col items-center border-b border-[#aca899] pt-1 pb-1.5">
      <div className="h-0.5 w-6 border-t border-b border-t-white border-b-[#aca899]" />
      <div className="mt-px mb-1 h-0.5 w-6 border-t border-b border-t-white border-b-[#aca899]" />
      {rightTools.map((tool, i) => (
        <ToolButton
          key={i}
          icon={tool.replace("!", "")}
          label={tool.replace("!", "")}
          pressed={tool.endsWith("!")}
        />
      ))}
    </div>
  </aside>
);

const BottomToolbar = () => (
  <div className="flex h-[30px] shrink-0 items-center border-t border-b border-t-[#aca899] border-b-[#aca899] pl-2">
    <Grip />
    <ToolButton icon="translate" label="Translate" pressed />
    <ToolButton icon="scale" label="Scale" pressed />
    <ToolButton icon="rotate" label="Rotate" pressed />
    <ToolButton icon="rings" label="Constraints" pressed />
    <ToolButton icon="muscle" label="Muscle" />
    <ToolButton icon="chain" label="Bone" />
    <ToolButton icon="channel" label="Channel" pressed />
    <ToolButton label="Other drivers" pressed>
      <span className="text-[9px] font-bold text-[#a5a193]">ETC</span>
    </ToolButton>
    <Separator />
    <ToolButton icon="leg" label="Key bone" />
    <ToolButton icon="leg" label="Key branch" />
    <ToolButton icon="skeleton" label="Key model" pressed />
    <Separator />
    <ToolButton icon="keyframe" label="Make keyframe" />
    <ToolButton icon="keyOff" label="Delete keyframe" />
    <Separator />
    <ScrollTrack className="w-[124px]" />
    <Separator />
    <ToolButton icon="first" label="First frame" />
    <ToolButton icon="prev" label="Previous frame" />
    <Separator />
    <input
      aria-label="Frame"
      className="mx-0.5 h-[22px] w-[70px] border border-black bg-[#ece9d8] px-1"
    />
    <Separator />
    <ToolButton icon="play" label="Play" />
    <ToolButton icon="loop" label="Loop" pressed />
    <Separator />
    <ToolButton icon="next" label="Next frame" />
    <ToolButton icon="last" label="Last frame" />
    <Separator />
  </div>
);

const readouts = [
  { icon: "arrowsX", value: "3", className: "w-[53px]" },
  { icon: "arrowsY", value: "1", className: "w-14" },
  { icon: "turnX", value: "90", className: "w-16 pl-3" },
  { icon: "turnY", value: "0", className: "w-14" },
  { icon: "turnZ", value: "0", className: "w-14" },
  { icon: "spread", value: "340", className: "w-16 pl-3" },
];

const StatusBar = () => (
  <footer className="flex h-5 shrink-0 items-center border-t border-white pl-[3px]">
    <span className="flex-1">Translate pivot.</span>
    {readouts.map(({ icon, value, className }) => (
      <span
        key={icon}
        className={clsx("flex h-4 shrink-0 items-center border-r border-[#cac6b6] pl-1", className)}
      >
        <Icon name={icon} />
        {value}
      </span>
    ))}
    <svg viewBox="0 0 16 16" className="ml-0.5 h-4 w-4">
      <path d="M12 4h2v2h-2zM8 8h2v2H8zM12 8h2v2h-2zM4 12h2v2H4zM8 12h2v2H8zM12 12h2v2h-2z" fill="#b8b4a2" />
    </svg>
  </footer>
);

export default function App() {
  return (
    <div className="flex h-screen flex-col bg-[#b8e4f8] pt-0.5 font-['Liberation_Sans',Arial,sans-serif] text-[11px] leading-4 text-black">
      <div className="flex min-h-0 flex-1 flex-col border-r-[3px] border-b-[5px] border-l border-[#0a3cd8] bg-[#ece9d8]">
        <TitleBar />
        <MenuBar />
        <TopToolbar />
        <div className="flex min-h-0 flex-1">
          <div className="flex w-[350px] shrink-0 flex-col">
            <ProjectWorkspace />
            <Properties />
          </div>
          <DocumentArea />
          <RightToolbar />
        </div>
        <BottomToolbar />
        <StatusBar />
      </div>
    </div>
  );
}
